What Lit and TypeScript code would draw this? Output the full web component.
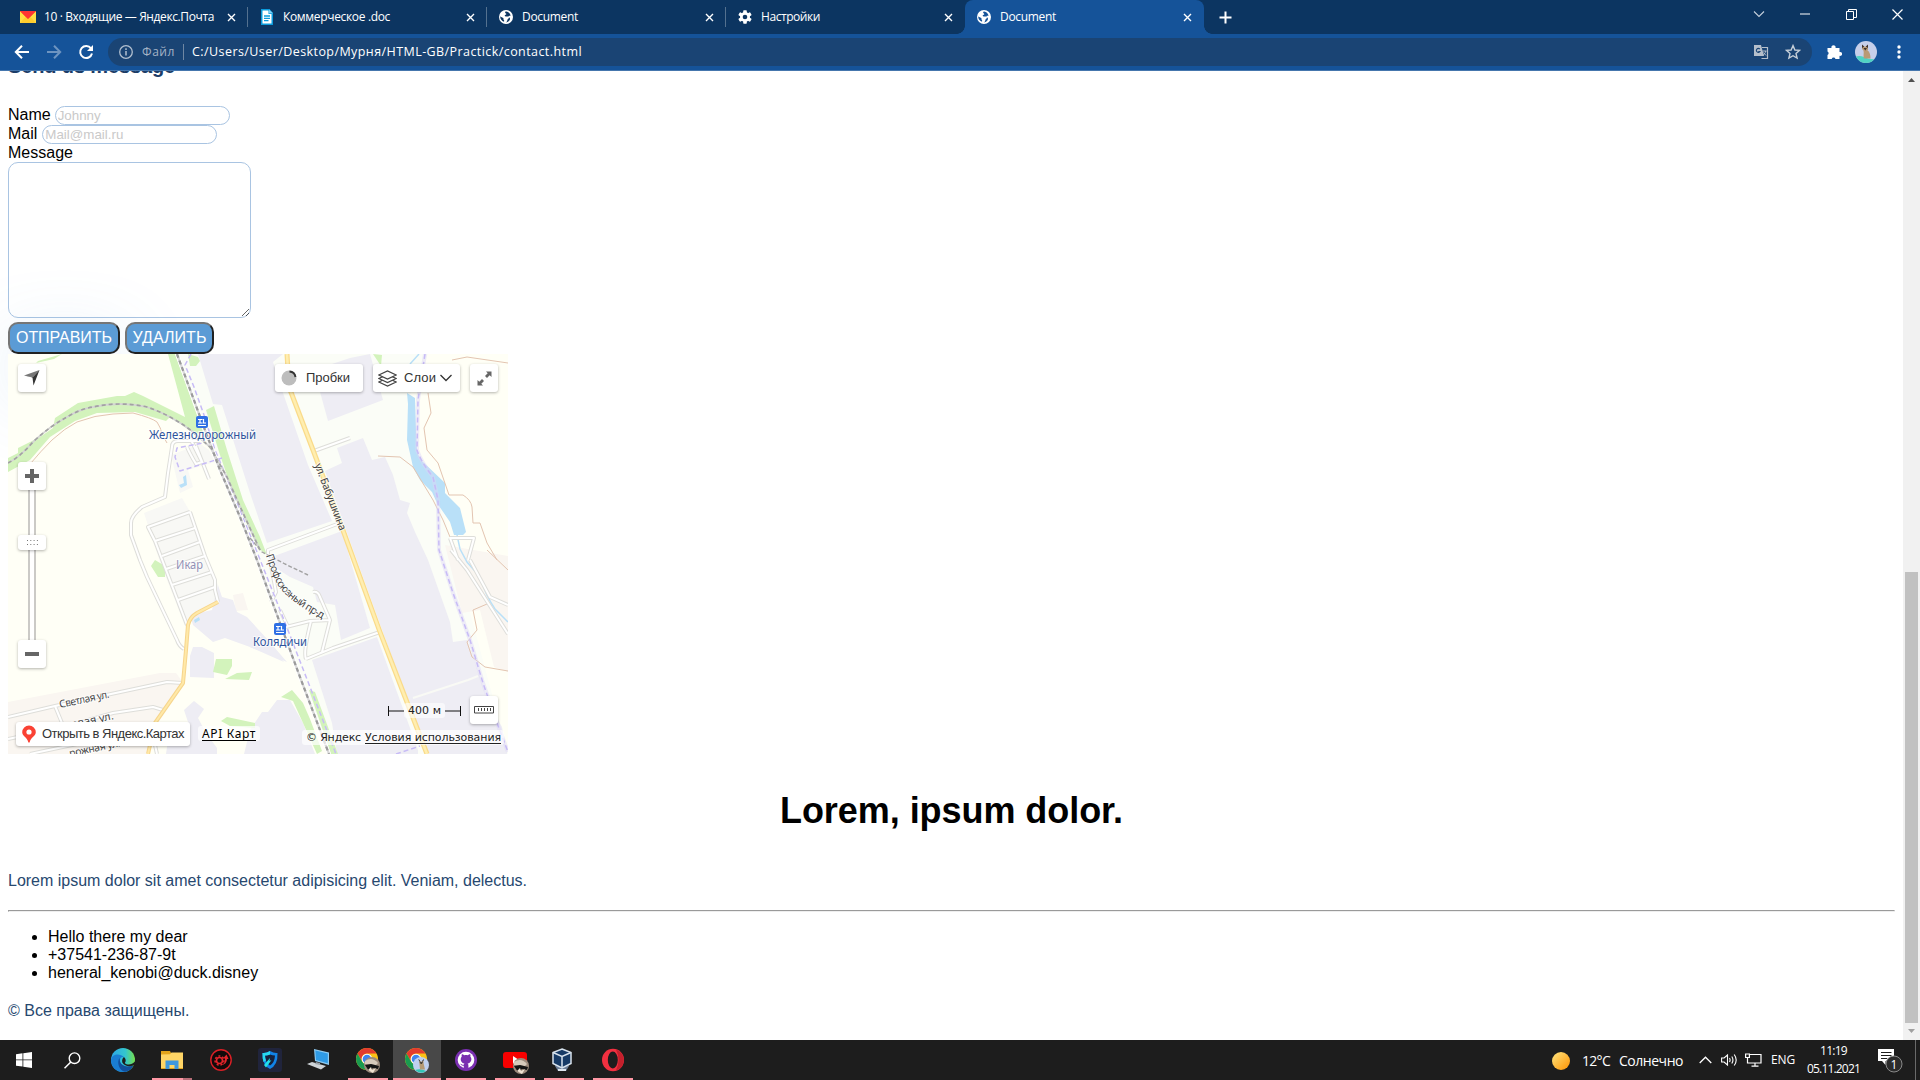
import { LitElement, html, svg, css } from "lit";
import { customElement, property } from "lit/decorators.js";
import { classMap } from "lit/directives/class-map.js";

/* Text that is tracked in or out so that it fills a given width. */
@customElement("fit-text")
class FitText extends LitElement {
  @property({ type: Number }) w = 0;
  static styles = css`
    :host { display: inline-block; white-space: nowrap; }
    .run { display: inline-block; }
    :host(.u) .run { text-decoration: underline; text-decoration-skip-ink: none; text-underline-offset: 2px; }
  `;
  render() {
    return html`<span class="run"><slot></slot></span>`;
  }
  firstUpdated() {
    const run = this.renderRoot.querySelector(".run") as HTMLElement;
    const n = (this.textContent || "").length;
    const natural = run.getBoundingClientRect().width;
    if (this.w && n > 1) run.style.letterSpacing = `${(this.w - natural) / n}px`;
  }
}

const globeIcon = (hole: string) => svg`<svg width="16" height="16" viewBox="0 0 16 16"><circle cx="8" cy="8" r="7" fill="#fff"/><path d="M8.200 2.400c-1.700.2-1.200 1.600-.3 2 1 .5.2 1.300-.7 1.500-.8.200-.6 1.500.5 1.500h2c1 0 1.500.9 1.200 1.700-.3.800-1.300.8-1.500 1.800-.2 1.200-1 2.300-1.700 2.500.2.300 3.600-.6 4.300-3.200.2-1.100-.5-1.600-1.300-2.200-.6-.5-.2-1.200.9-1.200h1c-.4-2.600-2.500-4.200-4.400-4.400zM2.300 7.200c.8 1.200 2.400 1.100 3 1.800.5.700-.2 1.200.4 1.800.6.600.5 1.200.3 2C3.400 11.800 1.900 9.500 2.300 7.200z" fill=${hole}/></svg>`;
const mail = svg`<svg width="16" height="16" viewBox="0 0 16 16"><rect y="2" width="16" height="12" fill="#fc3f1d"/><path d="M0 2v12h16V2L8 10z" fill="#fd4"/><path d="M0 14l5.500-6L8 10l2.500-2L16 14z" fill="#ffcc2e"/><path d="M0 2h16L8 10z" fill="#f33"/></svg>`;
const docIcon = svg`<svg width="16" height="16" viewBox="0 0 16 16"><path d="M2 0h8.500l3.500 4v12h-12z" fill="#0a9bdc"/><path d="M3.500 1.500H9.500v3.500h3v9.500h-9z" fill="#fff"/><path d="M10 .500l4 3.800h-4z" fill="#7fd0f5"/><path d="M5 7h6M5 9.300h6M5 11.600h4.500" stroke="#0a9bdc" stroke-width="1.300"/></svg>`;
const gear = svg`<svg width="16" height="16" viewBox="0 0 16 16"><g fill="#fff"><circle cx="8" cy="8" r="5"/><rect x="6.200" y="1.200" width="3.600" height="13.600" rx=".8"/><rect x="6.200" y="1.200" width="3.600" height="13.600" rx=".8" transform="rotate(60 8 8)"/><rect x="6.200" y="1.200" width="3.600" height="13.600" rx=".8" transform="rotate(120 8 8)"/></g><circle cx="8" cy="8" r="2.300" fill="#0c3561"/></svg>`;

const tabs = [
  { icon: mail, title: "10 · Входящие — Яндекс.Почта", w: 170, active: false },
  { icon: docIcon, title: "Коммерческое .doc", w: 107, active: false },
  { icon: globeIcon("#0c3561"), title: "Document", w: 56, active: false },
  { icon: gear, title: "Настройки", w: 59, active: false },
  { icon: globeIcon("#155399"), title: "Document", w: 56, active: true },
];

@customElement("browser-chrome")
class BrowserChrome extends LitElement {
  static styles = css`
    :host { display: block; font-family: "Open Sans", "Noto Sans", sans-serif; font-size: 12px; color: #fff; }
    svg { display: block; flex: none; }
    .strip { display: flex; height: 34px; background: #0c3561; padding-left: 9px; }
    .tab { box-sizing: border-box; width: 239px; height: 34px; display: flex; align-items: center; gap: 8px; padding: 0 12px 0 11px; position: relative; }
    .tab.sep::after { content: ""; position: absolute; right: 0; top: 7px; width: 1px; height: 20px; background: #54718f; }
    .tab.active { background: #155399; border-radius: 8px 8px 0 0; }
    .tab.active::before, .tab.active::after { content: ""; position: absolute; bottom: 0; width: 8px; height: 8px; }
    .tab.active::before { left: -8px; background: radial-gradient(circle at 0 0, transparent 7.500px, #155399 8px); }
    .tab.active::after { right: -8px; background: radial-gradient(circle at 100% 0, transparent 7.500px, #155399 8px); }
    .x { margin-left: auto; }
    .plus { display: flex; align-items: center; padding-left: 15px; }
    .win { margin-left: auto; display: flex; height: 28px; }
    .win > span { width: 46px; display: flex; align-items: center; justify-content: center; }
    .bar { box-sizing: border-box; display: flex; align-items: center; height: 37px; background: #155399; border-bottom: 1px solid #4576ad; padding-left: 6px; }
    .nav { width: 32px; display: flex; justify-content: center; }
    .omni { display: flex; align-items: center; box-sizing: border-box; margin-left: 6px; width: 1704px; height: 28px; border-radius: 14px; background: #1a4474; padding: 0 11px; line-height: 16px; }
    .file { color: #a4b3c6; margin-left: 9px; }
    .div { width: 1px; height: 16px; background: #6f87a3; margin: 0 8px; }
    .url { font-size: 12.500px; }
    .omni .tr { margin-left: auto; margin-right: 16px; }
    .side { display: flex; align-items: center; }
    .puz { margin-left: 14px; }
    .ava { margin-left: 13px; }
    .dots { margin-left: 20px; }
  `;
  render() {
    return html`
      <div class="strip">
        ${tabs.map((t, i) => html`<div class=${classMap({ tab: true, active: t.active, sep: i < 3 })}>
          ${t.icon}<fit-text w=${t.w}>${t.title}</fit-text>
          <svg class="x" width="9" height="9" viewBox="0 0 9 9"><path d="M1 1l7 7M8 1l-7 7" stroke="#fff" stroke-width="1.400"/></svg>
        </div>`)}
        <div class="plus"><svg width="13" height="13" viewBox="0 0 13 13"><path d="M6.500 .500v12M.500 6.500h12" stroke="#fff" stroke-width="2"/></svg></div>
        <div class="win">
          <span><svg width="12" height="8" viewBox="0 0 12 8"><path d="M1 1.500l5 5 5-5" fill="none" stroke="#c6d0dc" stroke-width="1.100"/></svg></span>
          <span><svg width="10" height="2" viewBox="0 0 10 2"><path d="M0 1h10" stroke="#fff"/></svg></span>
          <span><svg width="11" height="11" viewBox="0 0 11 11"><path d="M.500 2.500h7v8h-7zM2.500 2.500v-2h8v8h-3" fill="none" stroke="#fff"/></svg></span>
          <span><svg width="11" height="11" viewBox="0 0 11 11"><path d="M.500 .500l10 10M10.500 .500l-10 10" stroke="#fff" stroke-width="1.200"/></svg></span>
        </div>
      </div>
      <div class="bar">
        <span class="nav"><svg width="16" height="16" viewBox="0 0 16 16"><path d="M15 8H2M8 1.800L1.800 8 8 14.200" fill="none" stroke="#fff" stroke-width="2"/></svg></span>
        <span class="nav"><svg width="16" height="16" viewBox="0 0 16 16"><path d="M1 8h13M8 1.800L14.200 8 8 14.200" fill="none" stroke="#6e94c0" stroke-width="2"/></svg></span>
        <span class="nav"><svg width="16" height="16" viewBox="0 0 16 16"><path d="M13 4.400A6 6 0 1 0 14 9.500" fill="none" stroke="#fff" stroke-width="2"/><path d="M15 1v6H9z" fill="#fff"/></svg></span>
        <div class="omni">
          <svg width="14" height="14" viewBox="0 0 14 14"><circle cx="7" cy="7" r="6.300" fill="none" stroke="#b1bfcf" stroke-width="1.300"/><path d="M7 6v4.500M7 3.300v1.600" stroke="#b1bfcf" stroke-width="1.500"/></svg>
          <fit-text class="file" w="33">Файл</fit-text><span class="div"></span>
          <fit-text class="url" w="390">C:/Users/User/Desktop/Мурня/HTML-GB/Practick/contact.html</fit-text>
          <svg class="tr" width="16" height="16" viewBox="0 0 16 16"><path d="M1 1h7l3 11H1z" fill="#b5bfcb"/><path d="M9 3.500h5.500v11H8.500" fill="none" stroke="#b5bfcb" stroke-width="1.200"/><path d="M6.800 5a2 2 0 1 0 .2 2.500H5.300" fill="none" stroke="#1a4474" stroke-width="1.100"/><path d="M9.500 7h4M12.800 7c-.4 2-1.800 3.500-3.200 4.500M10.500 8.500l2.500 3" fill="none" stroke="#b5bfcb"/></svg>
          <svg width="16" height="16" viewBox="0 0 16 16"><path d="M8 1.600l1.900 4.400 4.700.4-3.600 3.100 1.100 4.600L8 11.700l-4.100 2.400L5 9.500 1.400 6.400l4.700-.4z" fill="none" stroke="#c5ced8" stroke-width="1.400"/></svg>
        </div>
        <div class="side">
          <svg class="puz" width="16" height="16" viewBox="0 0 16 16"><path d="M1.500 4h4a2.100 2.100 0 1 1 4 0h4v4a2 2 0 1 1 0 3.800V15h-4a2 2 0 0 0-3.800 0H1.500v-4a2 2 0 0 0 0-3.600z" fill="#fff"/></svg>
          <svg class="ava" width="22" height="22" viewBox="0 0 22 22"><clipPath id="a"><circle cx="11" cy="11" r="11"/></clipPath><g clip-path="url(#a)"><rect width="22" height="22" fill="#c6cfea"/><path d="M0 16q4-2 9 0 6 3 13 2v4H0z" fill="#4fd3c4"/><path d="M7 4l1.500 1.500h3L13 4v4.500l-.5 1c2 1 3 4 3 8H9c-1-3 .2-5-.5-8L7 8z" fill="#b99a75"/><path d="M7 3.500l2.200 2L7 7zM13 3.500l-2.200 2L13 7zM8.500 7h3.500l-1.700 2.500z" fill="#3d302c"/></g></svg>
          <svg class="dots" width="4" height="14" viewBox="0 0 4 14"><g fill="#fff"><circle cx="2" cy="2" r="1.700"/><circle cx="2" cy="7" r="1.700"/><circle cx="2" cy="12" r="1.700"/></g></svg>
        </div>
      </div>`;
  }
}

/* Street map: drawn in page coordinates, origin at (8, 354). */
const MAIN_RAIL = "M177 354L202 422 220 470 240 517 257 560 280 623 300 677 329 754";
const WEST_RAIL = "M8 463Q20 457 33 442 50 426 67 417 80 409 93 407 106 404 120 404 134 404 147 407 159 411 170 417 183 424 193 432L210 447 227 477 238 502 260 550";
const HIGHWAY = "M287 354L289 387 313 450 340 522 380 632 405 697 427 754";
const SPUR = "M218 602L197 613Q190 617 188 625L186 650 183 683 155 723 148 754";
const ROADS = [
  "M200 441H178Q172 441 172 447L168 473 165 497 142 507Q131 516 131 523V535L140 560 147 577 177 640Q179 646 184 649",
  "M190 512L148 527 155 541 187 625M190 512L205 556 215 580V590L218 602M155 541L195 528M162 556L200 542M166 569L205 556M172 585L212 572M178 600L215 587",
  "M187 447Q190 454 196 464L202 462 190 438M196 446L209 479",
  "M8 717L55 706 167 682 183 683M8 739L60 728 113 713 153 707 163 710M55 706L64 728M30 754L110 737M155 745L157 754",
  "M268 558V550L340 523M314 451L350 438",
  "M286 627L310 621 330 620 322 652M306 659L333 648 380 632M306 659Q303 652 311 621M313 592Q318 591 320 597L330 620M270 560L276 592 271 602M280 610L288 627",
  "M451 550L467 570 508 634M470 560L490 597 508 605M450 538H474L468 560M450 538L458 560",
];
const LABEL = "Noto Sans, Open Sans, sans-serif";
const station = (x: number, y: number) => svg`<g><rect x=${x} y=${y} width="12" height="12" rx="2" fill="#2f6fe4"/><path d="M${x + 2} ${y + 3.500}h4.500M${x + 2} ${y + 7}h4.500M${x + 4} ${y + 3.500}v3.500M${x + 7.500} ${y + 3}v4h2.500M${x + 2} ${y + 9.500}h8" fill="none" stroke="#fff" stroke-width="1.200"/></g>`;

@customElement("street-map")
class StreetMap extends LitElement {
  static styles = css`
    :host { display: block; position: relative; width: 500px; height: 400px; overflow: hidden; font-family: "Liberation Sans", Arial, sans-serif; font-size: 13px; color: #333; }
    svg { display: block; flex: none; }
    .box { position: absolute; display: flex; align-items: center; background: #fff; border-radius: 3px; box-shadow: 0 1px 3px rgba(0, 0, 0, .3); box-sizing: border-box; height: 28px; justify-content: center; }
    .geo { left: 10px; top: 10px; width: 28px; }
    .jam { left: 267px; top: 10px; width: 88px; justify-content: flex-start; padding-left: 6px; gap: 9px; }
    .lay { left: 365px; top: 10px; width: 87px; justify-content: flex-start; padding-left: 5px; gap: 7px; }
    .lay .chev { margin-left: -3px; }
    .full { left: 462px; top: 10px; width: 28px; }
    .rail { position: absolute; left: 20px; top: 130px; width: 8px; height: 165px; box-sizing: border-box; border: solid #cbcac6; border-width: 0 2px; background: #fff; }
    .in { left: 10px; top: 108px; width: 28px; }
    .knob { left: 10px; top: 181px; width: 28px; height: 15px; }
    .out { left: 10px; top: 286px; width: 28px; }
    .ruler { left: 462px; top: 342px; width: 28px; }
    .open { left: 8px; top: 368px; width: 174px; height: 24px; justify-content: flex-start; padding-left: 6px; gap: 6px; }
    .tag { position: absolute; display: flex; background: rgba(255, 255, 255, .7); border-radius: 3px; font: 11px/15px "DejaVu Sans", sans-serif; color: #000; padding: 0 2px; white-space: nowrap; gap: 4px; }
    .api { left: 190px; top: 372px; font-size: 12px; padding: 0 4px; font-family: "Noto Sans", sans-serif; }
    .copy { right: 4px; top: 376px; padding: 0 3px 0 4px; color: #222; font-size: 11px; }
    .scale { position: absolute; left: 380px; top: 349px; display: flex; align-items: center; font: 11px/15px "DejaVu Sans", sans-serif; color: #222; }
    .scale .n { background: rgba(255, 255, 255, .6); border-radius: 3px; padding: 0 4px; }
  `;
  render() {
    return html`
      <svg width="500" height="400" viewBox="8 354 500 400">
        <rect x="8" y="354" width="500" height="400" fill="#fffff6"/>
        <g fill="#fbfdf7">
          <path d="M176 354H428L408 400V446L440 500 508 754H330L240 520z"/>
        </g>
        <g fill="#faf6f1">
          <path d="M8 702L160 673H176L184 684 153 730 146 754H8z"/>
          <path d="M445 545L508 556V672L494 667 480 610 462 613z"/>
          <path d="M233 595L243 593 248 610 236 611z"/>
        </g>
        <path d="M144 513L182 498 189 510 205 553 218 585V603L190 617 186 628 160 562z" fill="#f8f8f5"/>
        <path d="M171 455L200 444 209 450 215 462 188 470 193 487 180 493z" fill="#f8f8f5"/>
        <g fill="#eeedf4">
          <path d="M198 354H283L273 362 283 393 308 465 332 521 267 543 250 493 222 405 213 404z"/>
          <path d="M269 558L342 531 370 628 341 640 335 605 317 602 313 587 290 577 276 568z"/>
          <path d="M312 660L377 637 418 750V754H337L332 723z"/>
          <path d="M314 370L350 358 370 354 383 400 328 421z"/>
          <path d="M325 471L342 463 337 448 363 438 372 460 385 457 393 475 400 500 410 503 407 513 415 532 428 560 450 622 453 642 467 640 480 677 487 700 502 727 507 754H427L347 533z"/>
          <path d="M218 585L222 597 233 600 237 612 247 617 268 640 287 662 250 647 225 638 213 642 193 625 190 615 212 610z"/>
          <path d="M190 656L193 647H202L214 653V678L190 677z"/>
          <path d="M184 710L194 701 204 709 198 718 206 733 217 748V754H166L168 740 190 728z"/>
          <path d="M244 754L250 730 262 712H268L277 700H290L303 723 315 754z"/>
          <path d="M250 622Q262 636 284 662L250 647z"/>
        </g>
        <g fill="#d3f3bc">
          <path d="M8 458L18 453V448L40 437 53 428 55 418 78 403 117 396H125L134 392 143 396 185 417 168 354H175L203 432 196 434 170 417 166 421 135 412 97 413 75 421 50 437 30 460 8 472z"/>
          <path d="M206 410L214 406 227 450 243 500 260 537 267 555 258 548 233 493 220 455z"/>
          <path d="M32 367L38 361 62 354 54 359 36 363zM188 354L198 357 200 361 196 366H190zM373 354L382 355 381 366z"/>
          <path d="M155 560L165 566V577H158L151 566zM216 659H232V666L227 675 213 672zM225 679L237 673 252 672 249 680zM221 721L227 717 255 723V728L230 726z"/>
          <path d="M281 697L292 690 303 703 310 719 322 751 317 754 303 723 293 701zM309 690L315 692 338 754H331z"/>
        </g>
        <g fill="#b9e0f8">
          <path d="M407 393L415 398 416 430 417 450Q419 459 423 462L445 483V493L460 508 466 532 463 535H454L450 522 437 503 432 492 420 480 413 467 407 440 408 404z"/>
          <path d="M183 477L186 475 187 485 181 488 179 485 184 483zM194 620L199 617 200 620 195 623z"/>
        </g>
        <path d="M419 354L410 364M457 535L460 549 467 562 480 577Q486 596 495 609L508 622" fill="none" stroke="#b9e0f8" stroke-width="1.500"/>
        <g fill="none" stroke="#e3c5b1" stroke-width="1">
          <path d="M31 463Q40 452 52 440 65 428 77 422 95 415 113 414L133 413Q152 418 157 422 161 428 162 434L167 443M428 393L431 413 424 428 427 450 438 463 449 495H463Q471 500 472 507L473 523H480L487 543 497 560M378 456L400 457 413 467 433 500 443 520 450 537M452 360L467 357 508 363M487 550L508 570M487 604L473 610 477 630 467 642 472 657 485 667 508 671"/>
        </g>
        <g fill="none" stroke="#dededa" stroke-width="4" stroke-linejoin="round">${ROADS.map((d) => svg`<path d=${d}/>`)}</g>
        <g fill="none" stroke="#fff" stroke-width="2" stroke-linejoin="round">${ROADS.map((d) => svg`<path d=${d}/>`)}</g>
        <path d="M413 698L468 680 478 676" fill="none" stroke="#f9faf5" stroke-width="2"/>
        <g fill="none" stroke-linejoin="round">
          <path d="M425 354L418 400 417 450Q421 462 433 477L438 500 439 550 453 593 470 640 483 683 497 723 508 752" stroke="#dcd4f7" stroke-width="4" opacity=".45"/>
          <path d="M425 354L418 400 417 450Q421 462 433 477L438 500 439 550 453 593 470 640 483 683 497 723 508 752M222 458L180 471 175 457 177 448 203 443M396 754L420 746M191 354L185 365 194 387 204 415 215 450 221 464 233 493 257 552 284 620 336 754" stroke="#c7bbf6" stroke-width="1.500" stroke-dasharray="5 3"/>
          <path d=${HIGHWAY} stroke="#fadb8a" stroke-width="5"/><path d=${HIGHWAY} stroke="#ffeeb0" stroke-width="2.500"/>
          <path d=${SPUR} stroke="#f7d58c" stroke-width="4"/><path d=${SPUR} stroke="#ffe9a8" stroke-width="2"/>
          <path d=${MAIN_RAIL} stroke="#fff" stroke-width="4"/>
          <path d=${WEST_RAIL} stroke="#d4d4d4" stroke-width="1.800"/><path d=${WEST_RAIL} stroke="#a2a2a2" stroke-width="1.700" stroke-dasharray="4 3"/>
          <path d=${MAIN_RAIL} stroke="#dadada" stroke-width="2.200"/><path d=${MAIN_RAIL} stroke="#9a9a9a" stroke-width="2.200" stroke-dasharray="4 3"/>
          <path d="M250 538L262 552 285 564 308 575" stroke="#a2a2a2" stroke-width="1.400" stroke-dasharray="4 2"/>
        </g>
        ${station(196, 416)}${station(274, 623)}
        <g font-family=${LABEL} font-size="12" stroke="#fff" stroke-width="2" paint-order="stroke" stroke-opacity=".7">
          <text x="149" y="439" textLength="107" lengthAdjust="spacingAndGlyphs" fill="#2f549c">Железнодорожный</text>
          <text x="253" y="646" textLength="54" lengthAdjust="spacingAndGlyphs" fill="#2f549c">Колядичи</text>
          <text x="176" y="569" textLength="27" lengthAdjust="spacingAndGlyphs" fill="#9290b5">Икар</text>
          <g fill="#444" font-size="10.500">
            <text transform="translate(314.500 465) rotate(69)" textLength="71">ул. Бабушкина</text>
            <path id="prof" d="M266 555Q272 575 279 587 290 602 326 621" fill="none" stroke="none"/>
            <text><textPath href="#prof" textLength="89">Профсоюзный пр-д</textPath></text>
            <text transform="translate(60 708) rotate(-12)" textLength="51">Светлая ул.</text>
            <text transform="translate(72 728) rotate(-12)" textLength="43" lengthAdjust="spacingAndGlyphs">рвая ул.</text>
            <text transform="translate(70 757) rotate(-12)" textLength="52">рожная ул.</text>
          </g>
        </g>
      </svg>
      <div class="box geo"><svg width="16" height="16" viewBox="0 0 16 16"><path d="M0 5.500L15.500 0 9 7z" fill="#777"/><path d="M15.500 0L9.500 15.500 8.500 7.500 0 5.500 9 7z" fill="#333"/></svg></div>
      <div class="box jam"><svg width="16" height="16" viewBox="0 0 16 16"><circle cx="8" cy="8" r="7.500" fill="#bdbdbd"/><path d="M8.500 1.500a6.500 6.500 0 0 1 6 5.500" fill="none" stroke="#333" stroke-width="1.900"/></svg><fit-text w="44">Пробки</fit-text></div>
      <div class="box lay"><svg width="19" height="17" viewBox="0 0 19 17"><g fill="#fff" stroke="#444" stroke-width="1.300"><path d="M.8 12L9.500 8l8.700 4-8.700 4z"/><path d="M.8 8.500L9.500 4.500l8.700 4-8.700 4z"/><path d="M.8 5L9.500 1l8.700 4-8.700 4z"/></g></svg><fit-text w="32">Слои</fit-text><svg class="chev" width="12" height="8" viewBox="0 0 12 8"><path d="M.500 1L6 6.500 11.500 1" fill="none" stroke="#333" stroke-width="1.300"/></svg></div>
      <div class="box full"><svg width="15" height="15" viewBox="0 0 15 15"><path d="M9 .500H14.500V6L12.700 4.300 10 7 8 5 10.700 2.300zM6 14.500H.500V9L2.300 10.700 5 8 7 10 4.300 12.700z" fill="#666"/></svg></div>
      <div class="rail"></div>
      <div class="box in"><svg width="14" height="14" viewBox="0 0 14 14"><path d="M7 0v14M0 7h14" stroke="#666" stroke-width="4"/></svg></div>
      <div class="box knob"><svg width="11" height="5" viewBox="0 0 11 5"><path d="M0 .500h11M0 4.500h11" stroke="#777" stroke-dasharray="1 2.300"/></svg></div>
      <div class="box out"><svg width="14" height="4" viewBox="0 0 14 4"><path d="M0 2h14" stroke="#666" stroke-width="4"/></svg></div>
      <div class="box ruler"><svg width="20" height="8" viewBox="0 0 20 8"><path d="M.500 .500h19v6.500H.500zM4.500 2v3M7.500 2v3M10.500 2v3M13.500 2v3M16.500 2v3" fill="none" stroke="#444"/></svg></div>
      <div class="scale"><svg width="16" height="10" viewBox="0 0 16 10"><path d="M.500 0v10M0 5h16" stroke="#111" fill="none"/></svg><fit-text class="n" w="33">400 м</fit-text><svg width="16" height="10" viewBox="0 0 16 10"><path d="M15.500 0v10M0 5h16" stroke="#111" fill="none"/></svg></div>
      <div class="box open"><svg width="14" height="18" viewBox="0 0 14 18"><path d="M7 .500a6.800 6.800 0 0 1 6.800 6.800C13.800 11 9 12 7.600 17.500H6.400C5 12 .2 11 .2 7.300A6.800 6.800 0 0 1 7 .500z" fill="#fa4234"/><circle cx="7" cy="7" r="2.600" fill="#fff"/></svg><fit-text w="142">Открыть в Яндекс.Картах</fit-text></div>
      <div class="tag api"><fit-text class="u" w="54">API Карт</fit-text></div>
      <div class="tag copy"><fit-text w="55">© Яндекс</fit-text><fit-text class="u" w="136">Условия использования</fit-text></div>`;
  }
}

const cat = svg`<g><circle cx="18" cy="19" r="8" fill="#9c8b7c"/><path d="M11 15q7-5 13 2l-2 2-11-1z" fill="#d6cabb"/><path d="M11 19l6-1 8 2-1 3-5-1-4 3z" fill="#141414"/><path d="M14 24l3-3 1 3 4-2-3 5z" fill="#efe3d1"/></g>`;
const siam = svg`<g><circle cx="18" cy="19" r="8" fill="#bfd0ef"/><path d="M12 24q6-2 11 1-5 4-11-1z" fill="#34c6b6"/><path d="M16 14l1.500 1.500H19l1.500-1.500v3l1.500 6.500h-5z" fill="#b59a74"/><path d="M15.800 13.500l1.200 2zM20.500 13.500l-1 2zM17 16.500h2.500l-1.200 1.500z" fill="#333" stroke="#333" stroke-width=".6"/></g>`;
const chrome = (badge: unknown) => svg`<svg width="24" height="26" viewBox="2 1 24 26"><circle cx="13" cy="13" r="11" fill="#fbc116"/><path d="M3.500 7.500A11 11 0 0 1 22.500 7.500H13a5.500 5.500 0 0 0-4.800 8.200z" fill="#e33b2e"/><path d="M3.500 7.500A11 11 0 0 0 13 24l4.800-8.300a5.500 5.500 0 0 1-9.600 0z" fill="#199b50"/><circle cx="13" cy="13" r="5.300" fill="#fff"/><circle cx="13" cy="13" r="4.300" fill="#3f83ee"/>${badge}</svg>`;

const apps = [
  { run: "", art: svg`<svg width="24" height="24" viewBox="0 0 24 24"><defs><linearGradient id="e1" x1="0" x2="1"><stop offset="0" stop-color="#2da7e8"/><stop offset=".6" stop-color="#33c5ce"/><stop offset="1" stop-color="#76df4c"/></linearGradient></defs><circle cx="12" cy="12" r="12" fill="url(#e1)"/><path d="M0 12C1 5.500 9 5 13 9c-3-.5-4.500 1.500-4 4.500C10 18 16 20 22 17.500 19 23 15 24 12 24 5 24 0 19 0 12z" fill="#1a7dd2"/><path d="M8.500 10C5.500 14 8 22.500 14 23.800 18 23.500 21 21 22.300 17.600 17 20 10.500 18 9 13.500z" fill="#124f9c"/><path d="M13 9q3 3 .8 6C16 17.500 21 17 24 13.500V17L22.300 17.600Q15 20 11.300 14.500 10.500 11 13 9z" fill="#1d1d1d"/></svg>` },
  { run: "multi", art: svg`<svg width="22" height="18" viewBox="0 0 22 18"><path d="M0 0h9l1.500 3H22v15H0z" fill="#e3a41c"/><path d="M0 3.500l9-.3 1.500-1.700H22V17H0z" fill="#ffd566"/><path d="M4.500 18V9.500h13V18h-4v-4h-5v4z" fill="#3f98dd"/></svg>` },
  { run: "", art: svg`<svg width="22" height="22" viewBox="0 0 22 22"><circle cx="11" cy="11" r="10.200" fill="#120a0a" stroke="#da2026" stroke-width="1.400"/><circle cx="9.500" cy="11.500" r="3" fill="none" stroke="#e4252b" stroke-width="1.600"/><circle cx="9.500" cy="11.500" r="4.500" fill="none" stroke="#e4252b" stroke-width="1.500" stroke-dasharray="2 1.900"/><path d="M11 16.500q4.500-2 4-7h-2l3.500-4 2 4.500h-1.500q0 5-6 6.500z" fill="#e4252b"/></svg>` },
  { run: "on", art: svg`<svg width="24" height="24" viewBox="0 0 24 24"><rect width="24" height="24" rx="3" fill="#20243c"/><path d="M12 3q4 2.500 7.500 2Q20 17 12 21 4 17 4.500 5 8 5.500 12 3z" fill="#1283e8"/><path d="M12 6.500q2.500 1 5 1-.3 7-5 10-4.700-3-5-10 2.500 0 5-1z" fill="#16203c"/><path d="M4.500 5q4 .500 7.500-2v3.500q-2.500 1.300-5 1 0 3 1 5L5.500 14Q4.300 10 4.500 5z" fill="#27d7ee"/><path d="M6 17l6-7-.5 3 2-1-5.500 7.500z" fill="#22e0e8"/></svg>` },
  { run: "", art: svg`<svg width="24" height="24" viewBox="0 0 24 24"><path d="M7 1l15 3.500V17L8 13z" fill="#8ecbf2"/><path d="M8.300 2.500l12.500 3v9.800L9 12z" fill="#2f9be6"/><path d="M0 16l5-2 14 4-5 3.500z" fill="#cfd4d8"/><path d="M9 14l4 1v2l-5-1z" fill="#9aa3aa"/></svg>` },
  { run: "on", art: chrome(cat) },
  { run: "on active", art: chrome(siam) },
  { run: "on", art: svg`<svg width="24" height="24" viewBox="0 0 24 24"><circle cx="12" cy="12" r="11" fill="#7a2fb0"/><circle cx="12" cy="12" r="8.300" fill="#fff"/><path d="M9.800 21v-3.200c-2.400.4-2.800-1.400-3.800-2 1.500-.2 1.700 1.400 3.800 1 .1-.6.300-1 .7-1.300-4-.7-4.700-5-2.800-6.800-.2-.8-.2-1.600.2-2.500 1 0 1.800.6 2.400 1 1-.3 2.500-.3 3.500 0 .6-.4 1.400-1 2.400-1 .4.900.4 1.700.2 2.500 1.900 1.800 1.200 6.100-2.800 6.800.5.500.8 1 .8 2V21z" fill="#7a2fb0"/></svg>` },
  { run: "on", art: svg`<svg width="28" height="28" viewBox="0 0 28 28"><rect x="2" y="6" width="24" height="16" rx="3" fill="#f80000"/><path d="M12 10l6 4-6 4z" fill="#fff"/><g transform="translate(2 1)">${cat}</g></svg>` },
  { run: "on", art: svg`<svg width="26" height="26" viewBox="1 0 26 26"><path d="M7 15h10l2 4-3 5H8l-3-5z" fill="#6c7f98"/><path d="M8 23h8" stroke="#dde6ef" stroke-width="2"/><path d="M12 2l9 3.500v11L12 21 3 16.500v-11z" fill="#163a66" stroke="#d7e2ed" stroke-width="1.500"/><path d="M3 5.500L12 9.500l9-4M12 9.500V21" fill="none" stroke="#d7e2ed" stroke-width="1.500"/></svg>` },
  { run: "on", art: svg`<svg width="24" height="24" viewBox="0 0 24 24"><ellipse cx="12" cy="12" rx="11" ry="11.200" fill="#f23040"/><path d="M15 1.500A11 11 0 0 1 15 22.600Q20 12 15 1.500z" fill="#c4202c"/><ellipse cx="11.800" cy="12" rx="5" ry="8.500" fill="#1d1d1d"/></svg>` },
];

@customElement("task-bar")
class TaskBar extends LitElement {
  static styles = css`
    :host { display: flex; height: 40px; background: #1d1d1d; color: #fff; font-family: "Open Sans", "Noto Sans", sans-serif; font-size: 12px; }
    svg { display: block; flex: none; }
    .cell { width: 48px; display: flex; align-items: center; justify-content: center; }
    .apps { display: flex; padding-left: 2px; }
    .app { width: 49px; display: flex; align-items: center; justify-content: center; position: relative; }
    .on::after, .multi::after, .multi::before { content: ""; position: absolute; bottom: 0; left: 5px; width: 40px; height: 2px; background: #ff98a5; }
    .multi::after { width: 31px; }
    .multi::before { left: 36px; width: 9px; background: #b76e78; }
    .active { background: #484848; margin-left: 1px; width: 48px; }
    .active::after { left: 0; width: 48px; }
    .tray { margin-left: auto; display: flex; align-items: center; }
    .weather { display: flex; align-items: center; font-size: 14px; padding-top: 1px; }
    .weather .t { margin: 0 9px 0 12px; }
    .up { margin-left: 16px; }
    .vol { margin-left: 9px; }
    .net { margin-left: 7px; }
    .lang { margin-left: 9px; }
    .clock { display: flex; flex-direction: column; align-items: center; margin-left: 12px; margin-right: 1px; line-height: 18px; width: 53px; }
    .note { margin-left: 17px; }
    .end { width: 1px; height: 40px; background: #6a6a6a; margin: 0 4px 0 12px; }
  `;
  render() {
    return html`
      <div class="cell"><svg width="16" height="16" viewBox="0 0 16 16"><path d="M0 2.200L6.500 1.300v6.200H0zM7.300 1.200L16 0v7.500H7.300zM0 8.300h6.500v6.300L0 13.700zM7.300 8.300H16V16l-8.700-1.200z" fill="#fff"/></svg></div>
      <div class="cell"><svg width="17" height="17" viewBox="0 0 17 17"><circle cx="10.500" cy="6.200" r="5.300" fill="none" stroke="#fff" stroke-width="1.400"/><path d="M6.800 10L.500 16.300" stroke="#fff" stroke-width="1.600"/></svg></div>
      <div class="apps">${apps.map((a) => html`<div class="app ${a.run}">${a.art}</div>`)}</div>
      <div class="tray">
        <div class="weather">
          <svg width="18" height="18" viewBox="0 0 18 18"><defs><linearGradient id="s" x1="0" y1="0" x2="1" y2="1"><stop offset="0" stop-color="#ffe680"/><stop offset="1" stop-color="#ff9200"/></linearGradient></defs><circle cx="9" cy="9" r="9" fill="url(#s)"/></svg>
          <fit-text class="t" w="28">12°C</fit-text><fit-text w="64">Солнечно</fit-text>
        </div>
        <svg class="up" width="13" height="8" viewBox="0 0 13 8"><path d="M.7 7L6.500 1.200 12.300 7" fill="none" stroke="#fff" stroke-width="1.300"/></svg>
        <svg class="vol" width="17" height="14" viewBox="0 0 17 14"><path d="M.6 5v4h2.500L6.500 12V2L3.100 5z" fill="none" stroke="#fff" stroke-width="1.100"/><path d="M8.500 5q1.200 2 0 4M10.800 3.500q2.300 3.500 0 7M13.200 1.500q4 5.500 0 11" fill="none" stroke="#fff" stroke-width="1.100"/></svg>
        <svg class="net" width="17" height="14" viewBox="0 0 17 14"><path d="M4.500 1.500h11.500v8.500H5M10 10v3M6.500 13.200h7M.600 1h3.800v3.500H.600zM2.500 4.500V10H5" fill="none" stroke="#fff" stroke-width="1.200"/></svg>
        <fit-text class="lang" w="24">ENG</fit-text>
        <div class="clock"><fit-text w="27">11:19</fit-text><fit-text w="53">05.11.2021</fit-text></div>
        <svg class="note" width="25" height="26" viewBox="0 0 25 26"><path d="M0 2h16v12H7.500V18L4 14H0z" fill="#fff"/><path d="M3 5.500h10.500M3 8.500h10.500M3 11.500h6" stroke="#1d1d1d"/><circle cx="16" cy="17" r="8" fill="#2b2b2b" stroke="#8a8a8a"/><text x="16" y="21.500" font-size="12" text-anchor="middle" fill="#fff">1</text></svg>
        <span class="end"></span>
      </div>`;
  }
}

@customElement("app-root")
class AppRoot extends LitElement {
  static styles = css`
    :host { display: flex; flex-direction: column; width: 1920px; height: 1080px; overflow: hidden; background: #fff; font: 16px/18px "Liberation Sans", Arial, sans-serif; color: #000; }
    .view { flex: 1; display: flex; min-height: 0; }
    .page { width: 1903px; box-sizing: border-box; padding: 0 8px; overflow: hidden; }
    .clip { height: 35px; display: flex; align-items: flex-start; }
    .clip .h { margin-top: -12px; font-weight: bold; font-size: 20px; line-height: 14px; color: #1c3d68; }
    .line { display: flex; align-items: center; height: 19px; gap: 4px; }
    .line span { padding-bottom: 2px; }
    .line.mail { gap: 5px; }
    .line.msg { height: 18px; }
    input { box-sizing: border-box; width: 175px; height: 19px; margin: 0; padding: 1px 2px; border: 1px solid #a9c4e2; border-radius: 10px; background: #fff; font: 13.333px "Liberation Sans", Arial, sans-serif; }
    input::placeholder { color: #c9c9c9; opacity: 1; }
    textarea { display: block; box-sizing: border-box; width: 243px; height: 156px; margin: 0; padding: 2px; border: 1px solid #a9c4e2; border-radius: 10px; resize: both; background: #fff; }
    .btns { display: flex; gap: 5px; padding-top: 4px; }
    .btn { box-sizing: border-box; height: 32px; display: flex; align-items: center; justify-content: center; border: 2px solid; border-color: #767676 #212121 #212121 #767676; border-radius: 10px; background: #5b9bd5; color: #fff; }
    .send { width: 112px; box-shadow: 0 30px 80px rgba(91, 155, 213, .3); }
    .del { width: 89px; }
    h1 { margin: 0; padding-top: 36px; font-size: 36px; line-height: 41px; text-align: center; }
    p { margin: 0; color: #27486f; }
    .lead { padding-top: 41px; }
    hr { margin: 20px 0 0; border: 1px solid; border-color: #9a9a9a #eee #eee #9a9a9a; }
    ul { margin: 0; padding: 16px 0 20px 40px; }
    .scroll { width: 17px; background: #f1f1f1; display: flex; flex-direction: column; align-items: center; position: relative; }
    .scroll svg { display: block; }
    .thumb { width: 13px; height: 451px; margin: 490px 0 6px; background: #c1c1c1; }
    .uparr { margin-top: 7px; }
    browser-chrome { position: relative; z-index: 1; }
  `;
  render() {
    return html`
      <browser-chrome></browser-chrome>
      <div class="view">
        <div class="page">
          <div class="clip"><fit-text class="h" w="167">Send us message</fit-text></div>
          <div class="line"><span>Name</span><input placeholder="Johnny" /></div>
          <div class="line mail"><span>Mail</span><input placeholder="Mail@mail.ru" /></div>
          <div class="line msg">Message</div>
          <textarea></textarea>
          <div class="btns"><div class="btn send"><fit-text w="96">ОТПРАВИТЬ</fit-text></div><div class="btn del"><fit-text w="74">УДАЛИТЬ</fit-text></div></div>
          <street-map></street-map>
          <h1><fit-text w="343">Lorem, ipsum dolor.</fit-text></h1>
          <p class="lead"><fit-text w="519">Lorem ipsum dolor sit amet consectetur adipisicing elit. Veniam, delectus.</fit-text></p>
          <hr />
          <ul><li>Hello there my dear</li><li>+37541-236-87-9t</li><li>heneral_kenobi@duck.disney</li></ul>
          <p>© Все права защищены.</p>
        </div>
        <div class="scroll">
          <svg class="uparr" width="7" height="4" viewBox="0 0 7 4"><path d="M0 4L3.500 0 7 4z" fill="#505050"/></svg>
          <span class="thumb"></span>
          <svg width="7" height="4" viewBox="0 0 7 4"><path d="M0 0L3.500 4 7 0z" fill="#a0a0a0"/></svg>
        </div>
      </div>
      <task-bar></task-bar>`;
  }
}
